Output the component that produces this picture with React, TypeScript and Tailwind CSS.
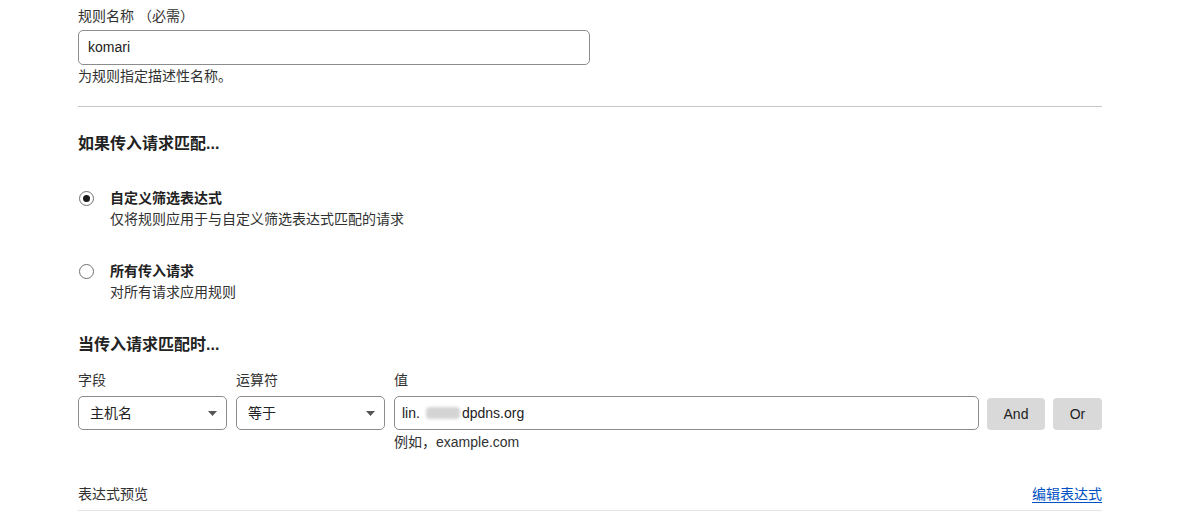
import React from 'react';

const font = { fontFamily: '"Liberation Sans", "Noto Sans CJK SC", sans-serif' };

const Radio: React.FC<{ checked?: boolean; title: string; desc: string }> = ({ checked, title, desc }) => (
  <div className="flex items-start">
    <div className="w-[32px] pt-[3px] pl-[1px]">
      <span className="flex items-center justify-center w-[15px] h-[15px] rounded-full border border-[#707070] bg-white">
        {checked && <span className="w-[7px] h-[7px] rounded-full bg-[#1a1a1a]" />}
      </span>
    </div>
    <div>
      <div className="text-[14px] leading-[21px] font-bold text-[#222]">{title}</div>
      <div className="text-[14px] leading-[21px] text-[#313131]">{desc}</div>
    </div>
  </div>
);

const Select: React.FC<{ value: string }> = ({ value }) => (
  <div className="flex items-center justify-between h-[34px] w-[149px] rounded-[5px] border border-[#8c8c8c] bg-white pl-[11px] pr-[9px] text-[14px] text-[#222]">
    <span>{value}</span>
    <svg width="9" height="5" viewBox="0 0 9 5">
      <path d="M0 0 L9 0 L4.5 5 Z" fill="#555" />
    </svg>
  </div>
);

export default function App() {
  return (
    <div className="bg-white w-[1191px] h-[511px] overflow-hidden" style={font}>
      <div className="ml-[78px] w-[1024px] pt-[6px]">
        {/* rule name */}
        <div className="text-[14px] leading-[20px] text-[#313131]">规则名称 （必需）</div>
        <div className="mt-[4px] h-[35px] w-[512px] rounded-[5px] border border-[#8c8c8c] flex items-center pl-[9px] text-[14px] text-[#222]">
          komari
        </div>
        <div className="text-[14px] leading-[20px] text-[#313131] mt-[1px]">为规则指定描述性名称。</div>
        <div className="mt-[20px] h-px bg-[#c8c8c8]" />

        <div className="mt-[25px] text-[16px] leading-[24px] font-bold text-[#222]">如果传入请求匹配...</div>

        <div className="mt-[32px]">
          <Radio checked title="自定义筛选表达式" desc="仅将规则应用于与自定义筛选表达式匹配的请求" />
        </div>
        <div className="mt-[31px]">
          <Radio title="所有传入请求" desc="对所有请求应用规则" />
        </div>

        <div className="mt-[30px] text-[16px] leading-[24px] font-bold text-[#222]">当传入请求匹配时...</div>

        <div className="mt-[13px] flex gap-[9px]">
          <div>
            <div className="text-[14px] leading-[20px] text-[#313131]">字段</div>
            <div className="mt-[6px]"><Select value="主机名" /></div>
          </div>
          <div>
            <div className="text-[14px] leading-[20px] text-[#313131]">运算符</div>
            <div className="mt-[6px]"><Select value="等于" /></div>
          </div>
          <div className="flex-1">
            <div className="text-[14px] leading-[20px] text-[#313131]">值</div>
            <div className="mt-[6px] flex items-start gap-[8px]">
              <div className="flex-1">
                <div className="h-[34px] rounded-[5px] border border-[#8c8c8c] flex items-center pl-[7px] text-[14px] text-[#222]">
                  <span>lin.</span>
                  <span className="inline-block ml-[6px] w-[34px] h-[12px] bg-[#d4d4d4] blur-[1.5px] rounded-sm" />
                  <span className="ml-[2px]">dpdns.org</span>
                </div>
                <div className="text-[14px] leading-[20px] text-[#313131] mt-[2px]">例如，example.com</div>
              </div>
              <button className="mt-[2px] h-[32px] w-[58px] rounded-[4px] bg-[#d9d9d9] text-[14px] text-[#222]">And</button>
              <button className="mt-[2px] h-[32px] w-[49px] rounded-[4px] bg-[#d9d9d9] text-[14px] text-[#222]">Or</button>
            </div>
          </div>
        </div>

        <div className="mt-[32px] flex items-center justify-between">
          <span className="text-[14px] leading-[20px] text-[#313131]">表达式预览</span>
          <a className="text-[14px] leading-[20px] text-[#0051c3] underline underline-offset-[3px]">编辑表达式</a>
        </div>
        <div className="mt-[6px] h-px bg-[#e5e5e5]" />
      </div>
    </div>
  );
}
